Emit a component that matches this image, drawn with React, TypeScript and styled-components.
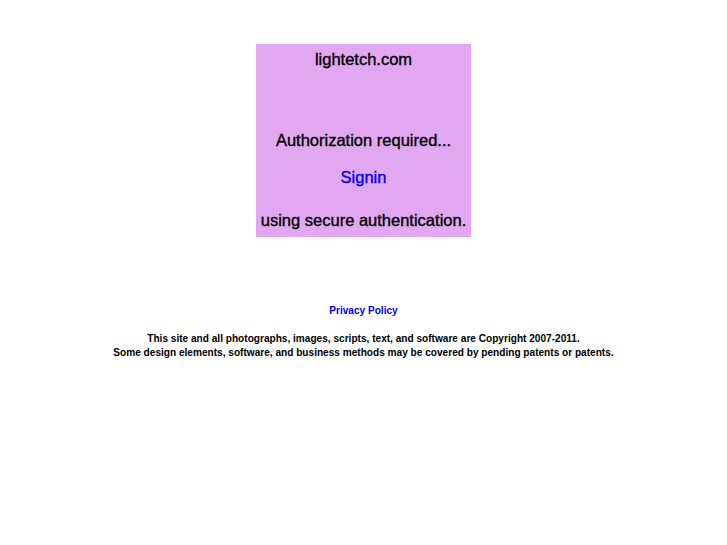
import React from "react";
import styled, { createGlobalStyle } from "styled-components";

const Global = createGlobalStyle`
  html, body { margin: 0; padding: 0; background: #ffffff; }
  body { font-family: "Liberation Sans", Arial, sans-serif; color: #000; }
`;

const Page = styled.div`
  display: flex;
  flex-direction: column;
  align-items: center;
  padding-top: 44px;
`;

const Box = styled.div`
  width: 215px;
  height: 193px;
  background: #e1a8f1;
  display: flex;
  flex-direction: column;
  align-items: center;
  box-sizing: border-box;
`;

const Line = styled.div<{ $top: number }>`
  margin-top: ${(p) => p.$top}px;
  font-size: 16.5px;
  line-height: 19px;
  white-space: nowrap;
  -webkit-text-stroke: 0.35px currentColor;
`;

const BoxLink = styled.a`
  color: #0000ee;
  text-decoration: none;
`;

const Footer = styled.div`
  margin-top: 67px;
  display: flex;
  flex-direction: column;
  align-items: center;
  font-size: 10.1px;
  font-weight: bold;
  line-height: 14px;
`;

const SmallLink = styled.a`
  color: #0000ee;
  text-decoration: none;
`;

const Copy = styled.div`
  margin-top: 14px;
  text-align: center;
  white-space: nowrap;
`;

export default function App() {
  return (
    <>
      <Global />
      <Page>
        <Box>
          <Line $top={6}>lightetch.com</Line>
          <Line $top={62}>Authorization required...</Line>
          <Line $top={18}>
            <BoxLink href="#">Signin</BoxLink>
          </Line>
          <Line $top={24}>using secure authentication.</Line>
        </Box>
        <Footer>
          <SmallLink href="#">Privacy Policy</SmallLink>
          <Copy>
            This site and all photographs, images, scripts, text, and software are Copyright 2007-2011.
            <br />
            Some design elements, software, and business methods may be covered by pending patents or patents.
          </Copy>
        </Footer>
      </Page>
    </>
  );
}
